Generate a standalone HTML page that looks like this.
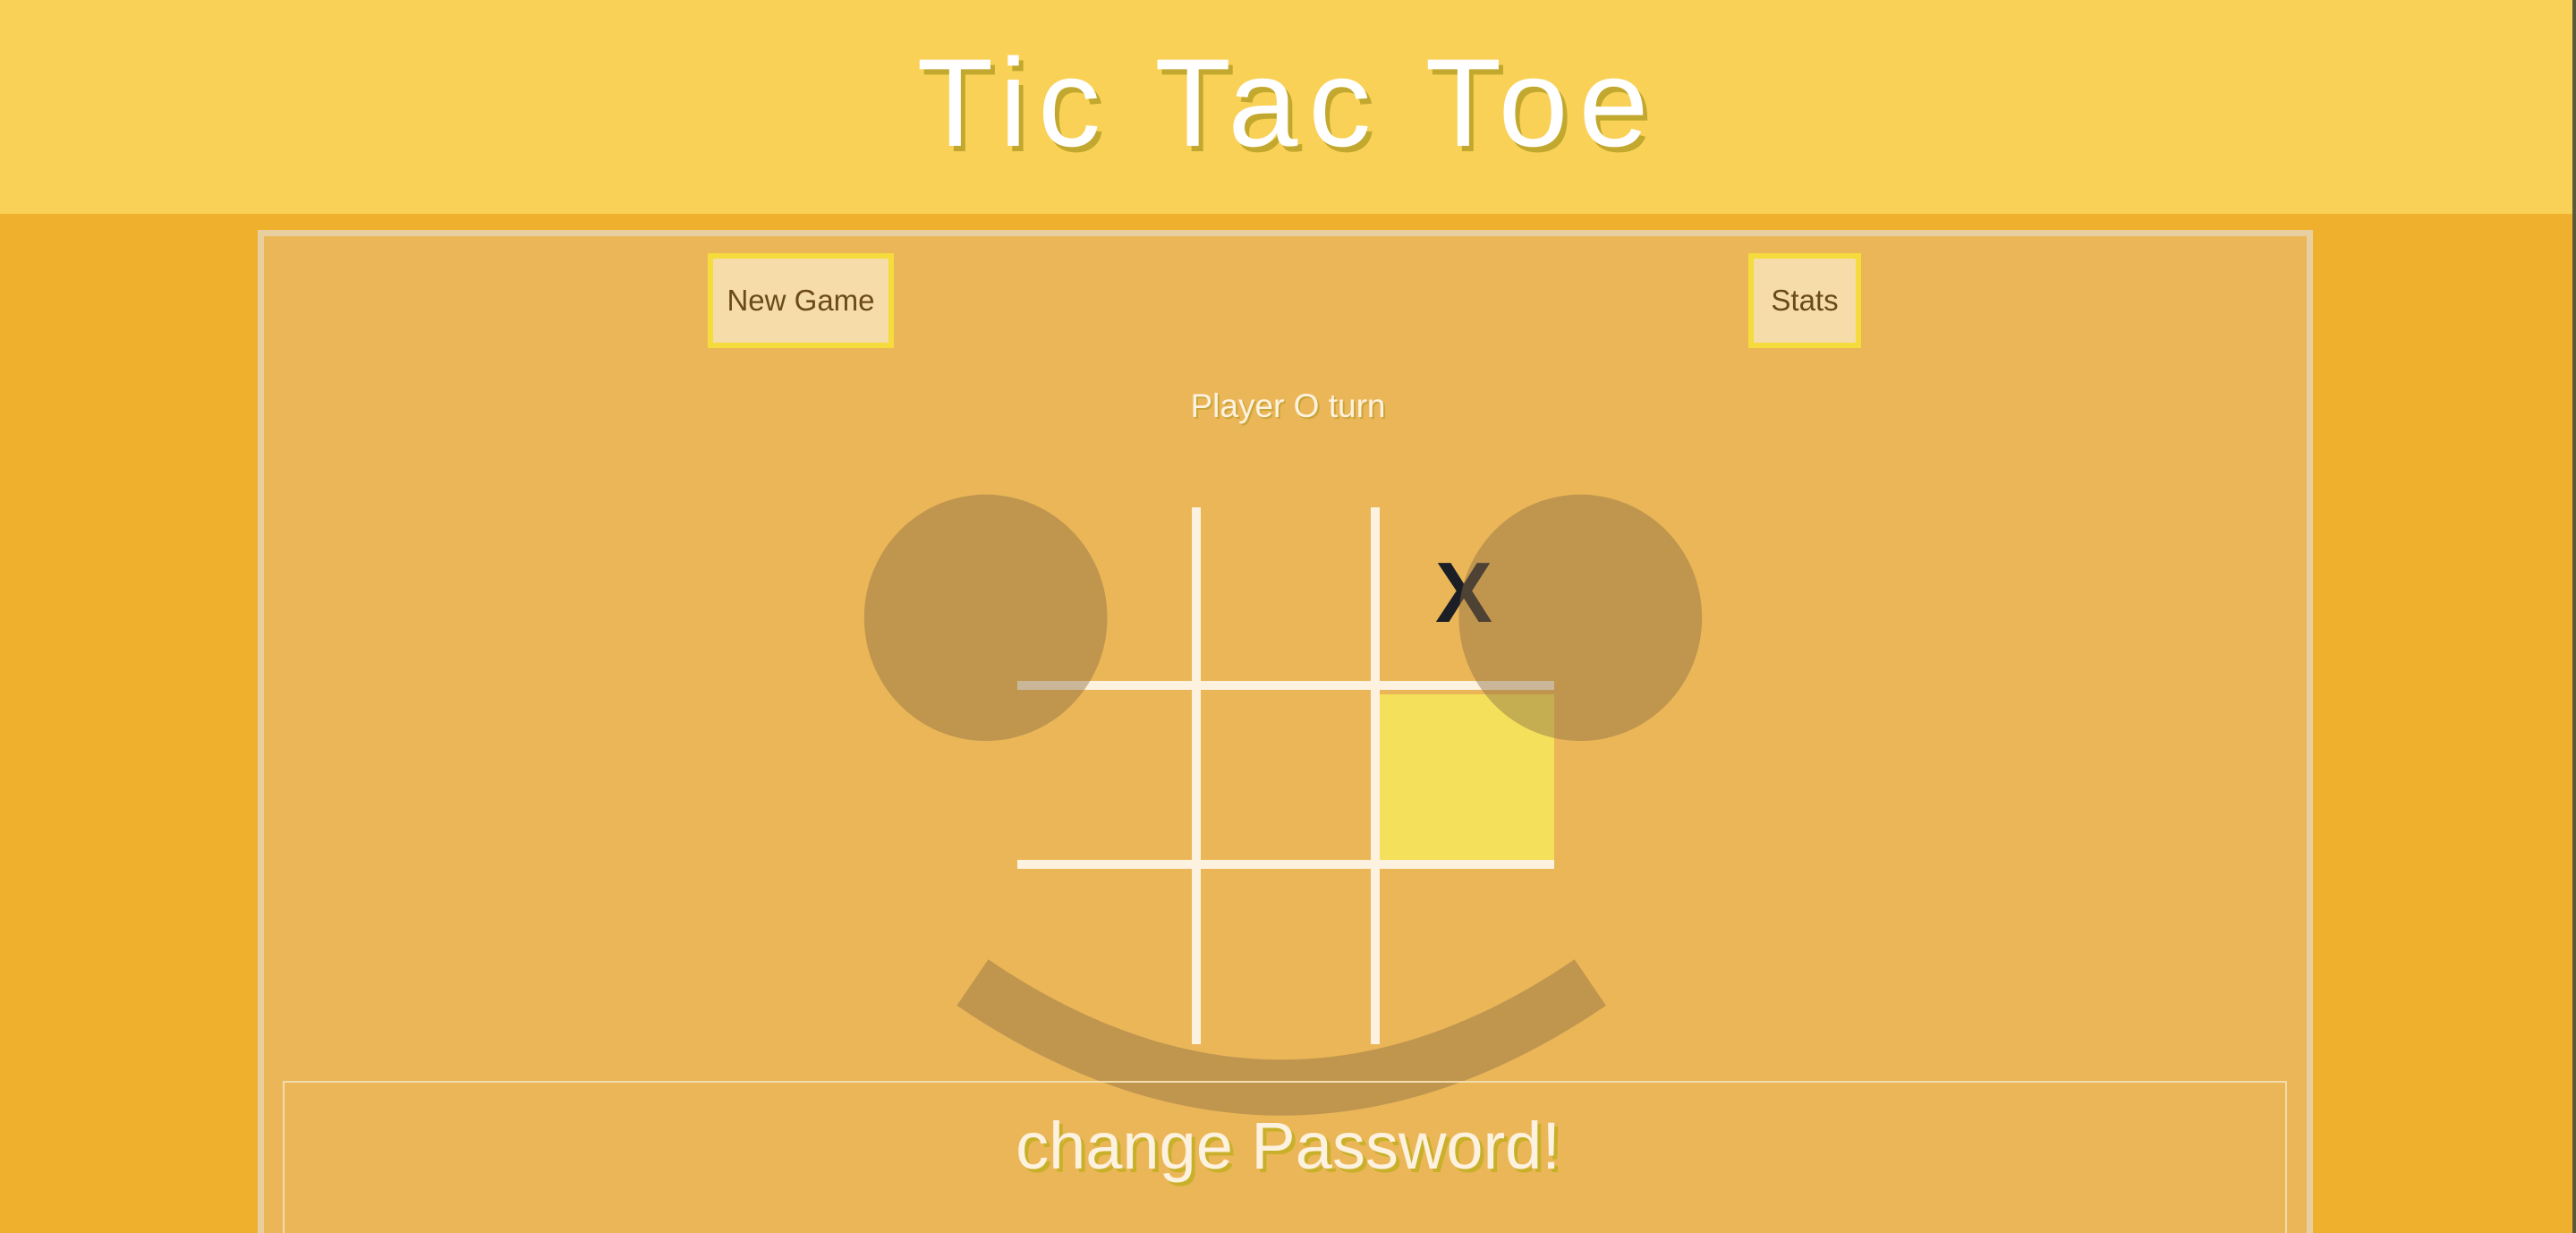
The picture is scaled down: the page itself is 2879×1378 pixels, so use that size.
<!DOCTYPE html>
<html><head><meta charset="utf-8"><style>
html,body{margin:0;padding:0;width:2879px;height:1378px;overflow:hidden;background:#EFB02E;font-family:"Liberation Sans",sans-serif;position:relative}
.hdr{position:absolute;left:0;top:0;width:2879px;height:239px;background:#F9D157}
.title{position:absolute;left:0;width:2879px;top:34px;text-align:center;font-size:140px;color:#fff;text-shadow:5px 6px 0 #C2A82E;letter-spacing:12px;font-family:"Liberation Sans",sans-serif}
.box{position:absolute;left:288px;top:257px;width:2297px;height:1140px;box-sizing:border-box;border:7px solid #E8CFA0;background:#EBB657}
.btn{position:absolute;top:283px;height:106px;box-sizing:border-box;border:6px solid #F5DC3C;background:#F6DCA8;color:#6B4A1A;font-size:33px;display:flex;align-items:center;justify-content:center}
.turn{position:absolute;left:0;width:2879px;top:433px;text-align:center;font-size:37px;color:#FDF2DF;text-shadow:2px 2px 0 #C9A53A}
.v{position:absolute;top:567px;width:10px;height:600px;background:#FDF2DF}
.h{position:absolute;left:1137px;width:600px;height:10px;background:#FDF2DF}
.cell{position:absolute;left:1542px;top:776px;width:195px;height:190px;background:#F4E05A}
.x{position:absolute;left:1604px;top:608px;font-size:96px;font-weight:bold;color:#1B1E25}
.bot{position:absolute;left:316px;top:1208px;width:2240px;height:200px;box-sizing:border-box;border:2px solid #F2DCAE}
.cp{position:absolute;left:0;width:2879px;top:1238px;text-align:center;font-size:74px;color:#FDF2DF;text-shadow:4px 4px 0 #C9B02A}
</style></head><body>
<div class="hdr"></div>
<div class="title">Tic Tac Toe</div>
<div class="box"></div>
<div class="btn" style="left:791px;width:208px">New Game</div>
<div class="btn" style="left:1954px;width:126px">Stats</div>
<div class="turn">Player O turn</div>
<div class="cell"></div>
<div class="v" style="left:1332px"></div>
<div class="v" style="left:1532px"></div>
<div class="h" style="top:761px"></div>
<div class="h" style="top:961px"></div>
<div class="x">X</div>
<svg style="position:absolute;left:0;top:0" width="2879" height="1378" viewBox="0 0 1568 750.5" preserveAspectRatio="none">
<g fill="rgba(140,110,70,0.45)">
<ellipse cx="600" cy="376" rx="74" ry="75"/>
<ellipse cx="962" cy="376" rx="74" ry="75"/>
</g>
<path d="M592,598 Q780,726 968,598" fill="none" stroke="rgba(140,110,70,0.45)" stroke-width="34" stroke-linejoin="round"/>
</svg>
<div class="bot"></div>
<div class="cp">change Password!</div>
<div style="position:absolute;right:0;top:0;width:4px;height:1378px;background:#5a5a3a"></div>
</body></html>
